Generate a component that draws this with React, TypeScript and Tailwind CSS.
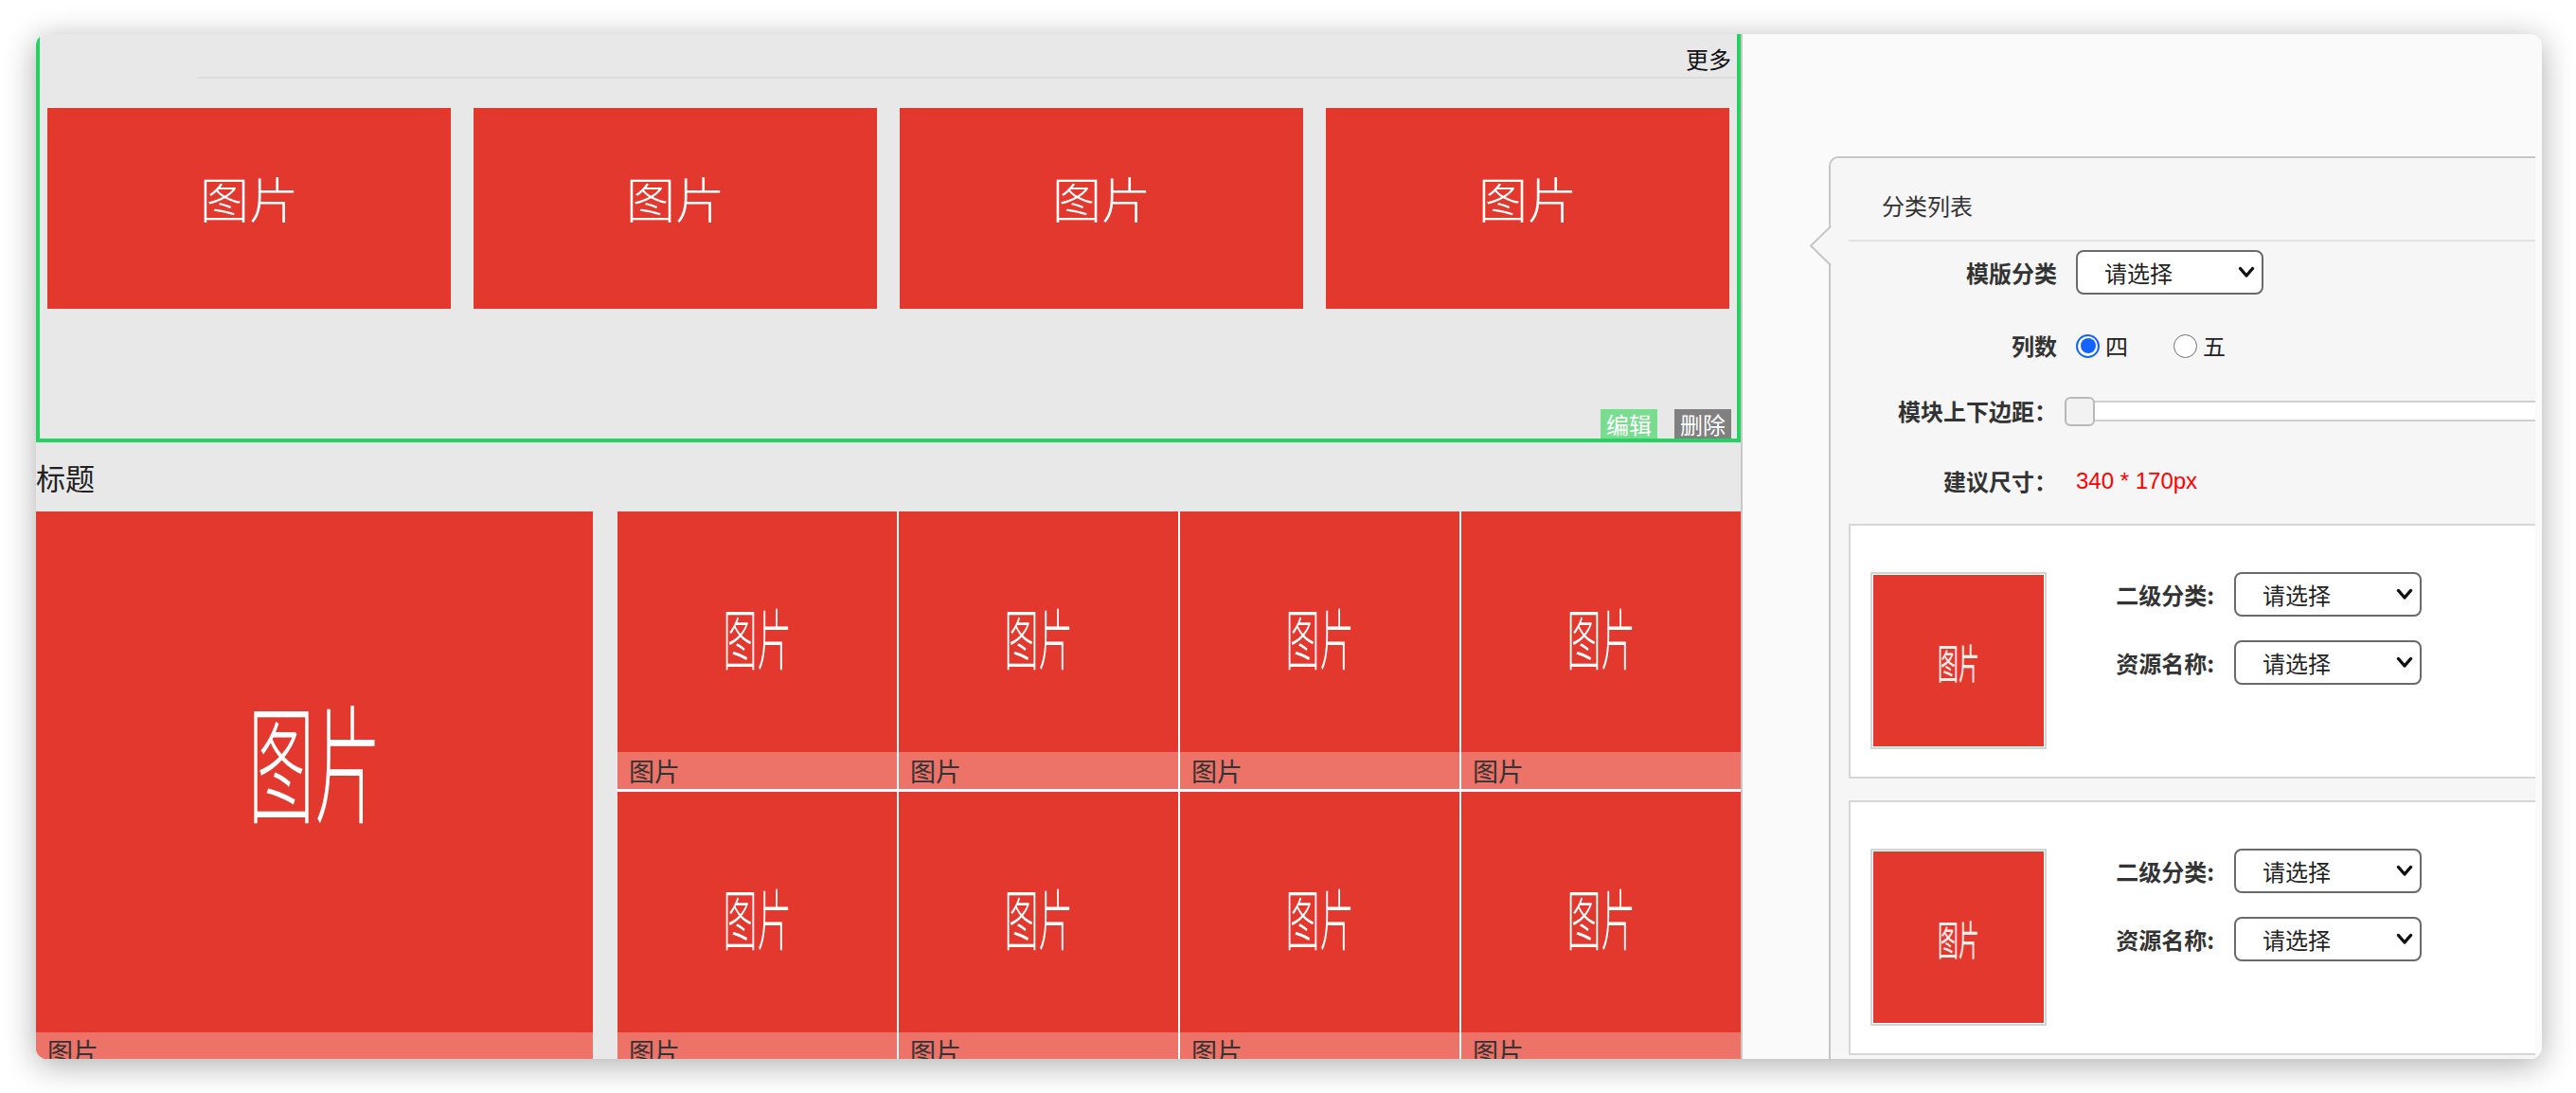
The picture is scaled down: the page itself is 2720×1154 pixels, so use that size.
import React from "react";

function Chevron() {
  return (
    <svg width="18" height="13" viewBox="0 0 18 13" className="shrink-0">
      <path d="M2.5 2.5 L9 10 L15.5 2.5" fill="none" stroke="#111" strokeWidth="3.4" strokeLinecap="round" strokeLinejoin="round" />
    </svg>
  );
}

function FakeSelect() {
  return (
    <div className="w-[198px] h-[47px] shrink-0 flex items-center justify-between border-2 border-[#6a6a6a] rounded-[8px] bg-white pl-[28px] pr-[7px] text-[24px] text-[#222] leading-none">
      <span>请选择</span>
      <Chevron />
    </div>
  );
}

function SmallCell() {
  return (
    <div className="h-[293px] flex flex-col bg-[#e2382d]">
      <div className="h-[254px] flex items-center justify-center pt-[8px]">
        <span className="text-[36px] text-white font-light leading-none scale-y-[1.95]">图片</span>
      </div>
      <div className="h-[39px] bg-[#ed7267] pl-[12px] flex items-center text-[27px] text-[#333] leading-none">图片</div>
    </div>
  );
}

function Card() {
  return (
    <div className="ml-[19px] w-[800px] h-[269px] border-2 border-[#d6d6d6] bg-white pl-[21px] pt-[49px] flex items-start shrink-0">
      <div className="w-[186px] h-[187px] border-2 border-[#d4d4d4] p-[1px] bg-white shrink-0">
        <div className="w-full h-full bg-[#e2382d] flex items-center justify-center">
          <span className="text-[22px] text-white/90 leading-none scale-y-[1.95]">图片</span>
        </div>
      </div>
      <div className="ml-[57px] flex flex-col gap-[25px]">
        <div className="flex items-center">
          <div className="w-[120px] text-right font-bold text-[24px] text-[#333] leading-none">二级分类:</div>
          <div className="ml-[21px]"><FakeSelect /></div>
        </div>
        <div className="flex items-center">
          <div className="w-[120px] text-right font-bold text-[24px] text-[#333] leading-none">资源名称:</div>
          <div className="ml-[21px]"><FakeSelect /></div>
        </div>
      </div>
    </div>
  );
}

export default function App() {
  return (
    <div className="w-[2720px] h-[1154px] bg-white pt-[36px] pl-[38px] overflow-hidden font-['Noto_Sans_CJK_SC','Noto_Sans',sans-serif]">
      <div className="w-[2646px] h-[1082px] rounded-[12px] overflow-hidden flex bg-[#fafafa] shadow-[0_6px_34px_rgba(0,0,0,0.33)]">
        {/* Left pane */}
        <div className="w-[1802px] shrink-0 bg-[#e8e8e8] border-r-2 border-[#c8c8c8] flex flex-col">
          {/* Selected module */}
          <div className="h-[431px] shrink-0 border-x-4 border-b-4 border-[#28d062] flex flex-col">
            <div className="h-[45px] flex items-center justify-end pr-[6px] pt-[6px] text-[24px] text-[#111] leading-none">更多</div>
            <div className="ml-[166px] h-[2px] bg-[#dcdcdc]" />
            <div className="mt-[31px] px-[8px] flex gap-[24px]">
              {[0, 1, 2, 3].map((i) => (
                <div key={i} className="flex-1 h-[212px] bg-[#e2382d] flex items-center justify-center pb-[22px]">
                  <span className="text-[52px] text-white font-light leading-none">图片</span>
                </div>
              ))}
            </div>
            <div className="mt-auto flex justify-end gap-[18px] pr-[6px]">
              <div className="w-[60px] h-[31px] bg-[#79dc8f] text-white text-[24px] leading-none flex items-center justify-center">编辑</div>
              <div className="w-[60px] h-[31px] bg-[#808080] text-white text-[24px] leading-none flex items-center justify-center">删除</div>
            </div>
          </div>
          {/* Title */}
          <div className="h-[73px] shrink-0 flex items-center text-[31px] text-[#222] leading-none">标题</div>
          {/* Grid */}
          <div className="flex gap-[26px] shrink-0">
            <div className="w-[588px] h-[589px] flex flex-col bg-[#e2382d] shrink-0">
              <div className="flex-1 flex items-center justify-center pb-[30px]">
                <span className="text-[70px] text-white font-light leading-none scale-y-[1.95]">图片</span>
              </div>
              <div className="h-[39px] bg-[#ed7267] pl-[12px] flex items-center text-[27px] text-[#333] leading-none">图片</div>
            </div>
            <div className="w-[1186px] grid grid-cols-4 gap-x-[2px] gap-y-[3px] bg-white">
              {[0, 1, 2, 3, 4, 5, 6, 7].map((i) => (
                <SmallCell key={i} />
              ))}
            </div>
          </div>
        </div>

        {/* Right pane */}
        <div className="flex-1 flex pt-[129px] pl-[91px] pr-[7px] min-w-0">
          <div className="flex-1 min-w-0 relative">
            <div className="absolute top-0 bottom-0 left-[-22px] right-0 overflow-hidden pl-[22px]">
              <div className="relative w-[820px] h-[1100px] border-l-2 border-t-2 border-[#c6c6c6] rounded-tl-[10px] bg-[#f6f6f6] flex flex-col">
                <svg width="24" height="41" viewBox="0 0 24 41" className="absolute left-[-22px] top-[72px]">
                  <polygon points="0,20.5 22,0 24,0 24,41 22,41" fill="#f6f6f6" />
                  <polyline points="22,0 1,20.5 22,41" fill="none" stroke="#c6c6c6" strokeWidth="2" />
                </svg>
                <div className="h-[86px] shrink-0 pl-[54px] pt-[14px] flex items-center text-[24px] text-[#333] leading-none">分类列表</div>
                <div className="ml-[19px] h-[2px] bg-[#e2e2e2] shrink-0" />

                {/* 模版分类 */}
                <div className="mt-[9px] h-[47px] pl-[19px] flex items-center shrink-0">
                  <div className="w-[220px] text-right font-bold text-[24px] text-[#333] leading-none">模版分类</div>
                  <div className="ml-[20px]"><FakeSelect /></div>
                </div>

                {/* 列数 */}
                <div className="mt-[29px] h-[50px] pl-[19px] flex items-center shrink-0">
                  <div className="w-[220px] text-right font-bold text-[24px] text-[#333] leading-none">列数</div>
                  <div className="ml-[20px] flex items-center text-[24px] text-[#222] leading-none">
                    <div className="w-[25px] h-[25px] rounded-full border-[2px] border-[#1463ff] bg-white flex items-center justify-center">
                      <div className="w-[16px] h-[16px] rounded-full bg-[#1463ff]" />
                    </div>
                    <span className="ml-[6px]">四</span>
                    <div className="ml-[48px] w-[25px] h-[25px] rounded-full border-[1.5px] border-[#6f6f6f] bg-white" />
                    <span className="ml-[6px]">五</span>
                  </div>
                </div>

                {/* 模块上下边距 */}
                <div className="mt-[20px] h-[48px] pl-[19px] flex items-center shrink-0">
                  <div className="w-[220px] text-right font-bold text-[24px] text-[#333] leading-none">模块上下边距：</div>
                  <div className="ml-[8px] flex-1 relative h-[31px] flex items-center">
                    <div className="w-full h-[22px] bg-white border-y-2 border-l-2 border-[#cfcfcf] rounded-l-[4px]" />
                    <div className="absolute left-0 top-0 w-[32px] h-[31px] rounded-[6px] bg-[#f2f2f2] border-2 border-[#b8b8b8]" />
                  </div>
                </div>

                {/* 建议尺寸 */}
                <div className="mt-[27px] h-[46px] pl-[19px] flex items-center shrink-0">
                  <div className="w-[220px] text-right font-bold text-[24px] text-[#333] leading-none">建议尺寸：</div>
                  <div className="ml-[20px] text-[24px] text-[#ff0000] leading-none font-['Liberation_Sans',sans-serif]">340 * 170px</div>
                </div>

                <div className="mt-[22px] shrink-0"><Card /></div>
                <div className="mt-[23px] shrink-0"><Card /></div>
              </div>
            </div>
          </div>
        </div>
      </div>
    </div>
  );
}
